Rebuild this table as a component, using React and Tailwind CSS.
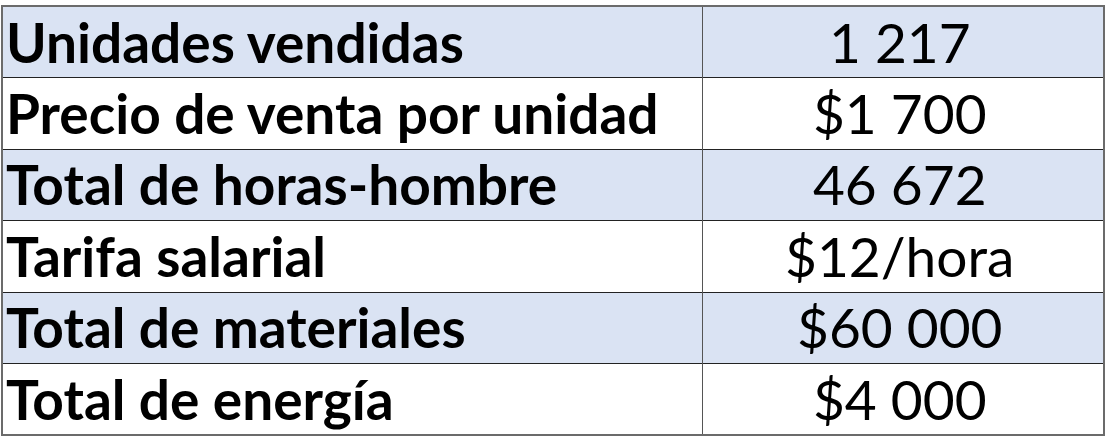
const rows = [
  ['Unidades vendidas', '1 217', true],
  ['Precio de venta por unidad', '$1 700', false],
  ['Total de horas-hombre', '46 672', true],
  ['Tarifa salarial', '$12/hora', false],
  ['Total de materiales', '$60 000', true],
  ['Total de energía', '$4 000', false],
];

export default function App() {
  return (
    <div className="w-[1106px] h-[444px] bg-white pt-[5px] pl-[1px]" style={{ fontFamily: 'Lato, "Noto Sans", sans-serif' }}>
      <table className="w-[1104px] border-collapse border-2 border-[#6b6b6b] text-black">
        <tbody>
          {rows.map(([label, value, shaded], i) => (
            <tr key={i} className={`h-[71.5px] ${shaded ? 'bg-[#dae3f3]' : 'bg-white'} ${i > 0 ? 'border-t border-[#222]' : ''}`}>
              <td className="w-[700px] pl-[3px] pr-0 font-bold text-[55px] leading-none border-r border-[#555]">{label}</td>
              <td className="text-center pr-[6px] text-[55px] leading-none">{value}</td>
            </tr>
          ))}
        </tbody>
      </table>
    </div>
  );
}
